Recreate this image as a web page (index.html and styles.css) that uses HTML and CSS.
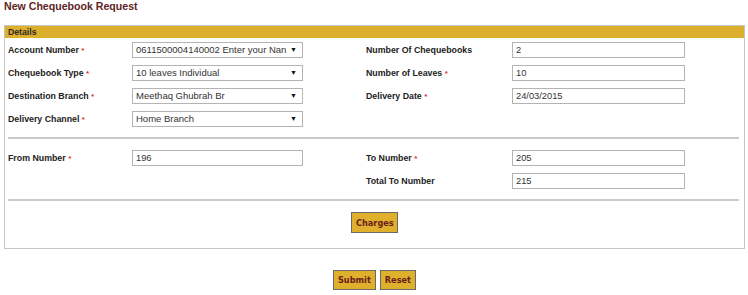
FILE: index.html
```html
<!DOCTYPE html>
<html lang="en">
<head>
  <meta charset="UTF-8" />
  <title>New Chequebook Request</title>
  <link rel="stylesheet" href="styles.css">
</head>
<body>
  <div class="page">
    <h1 class="title">New Chequebook Request</h1>

    <div class="panel">
      <div class="panel-head">Details</div>

      <div class="form-grid">
        <label class="lbl">Account Number <span class="req">*</span></label>
        <div class="cell"><span class="select"><span class="select-val">0611500004140002 Enter your Nan</span></span></div>
        <label class="lbl">Number Of Chequebooks</label>
        <div class="cell"><span class="field">2</span></div>

        <label class="lbl">Chequebook Type <span class="req">*</span></label>
        <div class="cell"><span class="select"><span class="select-val">10 leaves Individual</span></span></div>
        <label class="lbl">Number of Leaves <span class="req">*</span></label>
        <div class="cell"><span class="field">10</span></div>

        <label class="lbl">Destination Branch <span class="req">*</span></label>
        <div class="cell"><span class="select"><span class="select-val">Meethaq Ghubrah Br</span></span></div>
        <label class="lbl">Delivery Date <span class="req">*</span></label>
        <div class="cell"><span class="field">24/03/2015</span></div>

        <label class="lbl">Delivery Channel <span class="req">*</span></label>
        <div class="cell"><span class="select"><span class="select-val">Home Branch</span></span></div>
        <div></div>
        <div></div>
      </div>

      <hr class="divider">

      <div class="form-grid">
        <label class="lbl">From Number <span class="req">*</span></label>
        <div class="cell"><span class="field short">196</span></div>
        <label class="lbl">To Number <span class="req">*</span></label>
        <div class="cell"><span class="field">205</span></div>

        <div></div>
        <div></div>
        <label class="lbl">Total To Number</label>
        <div class="cell"><span class="field">215</span></div>
      </div>

      <hr class="divider">

      <div class="panel-actions">
        <button class="btn btn-charges">Charges</button>
      </div>
    </div>

    <div class="actions">
      <button class="btn">Submit</button>
      <button class="btn">Reset</button>
    </div>
  </div>
</body>
</html>
```

FILE: styles.css
```css
body {
  margin: 0;
  font-family: "Liberation Sans", Arial, sans-serif;
  background-color: #ffffff;
  color: #222;
}
.page {
  padding: 0 3px 0 4px;
}
.title {
  margin: 0;
  font-size: 10.6px;
  line-height: 13px;
  font-weight: bold;
  color: #5e2424;
}
.panel {
  margin-top: 12px;
  border: 1px solid #c6c6c6;
  padding-bottom: 15px;
}
.panel-head {
  background-color: #dcb02c;
  height: 12px;
  line-height: 12px;
  padding-left: 3px;
  font-size: 8.7px;
  font-weight: bold;
  color: #2a2a2a;
}
.form-grid {
  display: grid;
  grid-template-columns: 124px 234px 146px 173px;
  grid-auto-rows: 16px;
  row-gap: 7px;
  padding: 4px 0 0 3px;
}
.divider + .form-grid {
  padding-top: 11px;
}
.lbl {
  font-size: 8.8px;
  font-weight: bold;
  line-height: 16px;
  color: #222;
}
.req {
  color: #e0302a;
  font-size: 8px;
}
.cell {
  display: flex;
}
.field,
.select {
  box-sizing: border-box;
  height: 16px;
  border: 1px solid #b4b4b4;
  background-color: #fff;
  font-size: 9.3px;
  line-height: 14px;
  padding-left: 3px;
  color: #333;
  white-space: nowrap;
  overflow: hidden;
}
.field {
  width: 173px;
}
.field.short {
  width: 171px;
}
.select {
  position: relative;
  width: 171px;
  font-size: 9.5px;
}
.select-val {
  display: block;
  width: 152px;
  overflow: hidden;
}
.select::after {
  content: "\25BC";
  position: absolute;
  right: 5px;
  top: 0;
  font-size: 7px;
  line-height: 14px;
  color: #111;
}
.divider {
  margin: 10px 5px 0 3px;
  border: 0;
  height: 2px;
  background-color: #c9c9c9;
}
.panel-actions {
  display: flex;
  justify-content: center;
  margin-top: 11px;
}
.btn {
  box-sizing: border-box;
  height: 20px;
  padding: 0 4px;
  background-color: #deb02b;
  border: 1px solid #6a6a6a;
  font-family: "DejaVu Sans", Verdana, sans-serif;
  font-size: 8.2px;
  font-weight: bold;
  color: #6b1c1c;
}
.btn-charges {
  height: 21px;
  width: 47px;
}
.actions {
  display: flex;
  justify-content: center;
  gap: 4px;
  margin-top: 21px;
}
```
